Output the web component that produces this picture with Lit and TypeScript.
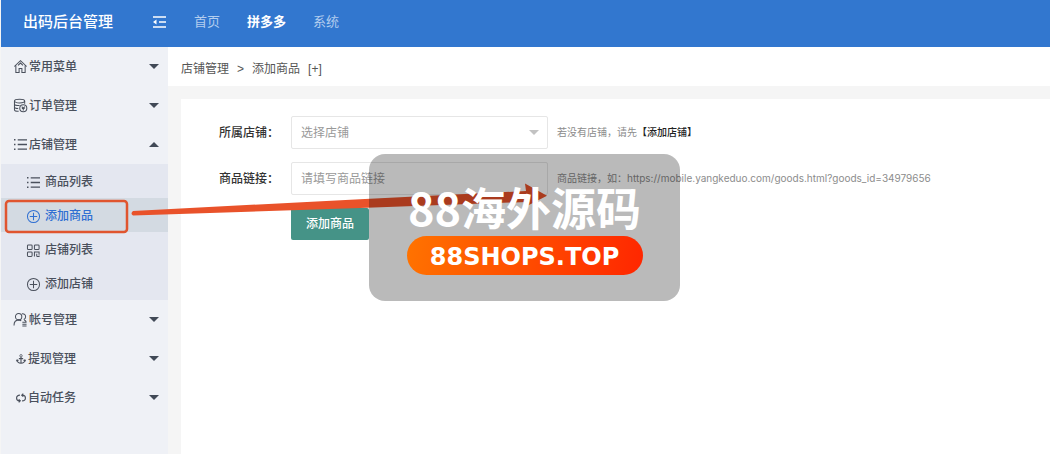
import { LitElement, html, svg, css } from "lit";
import { customElement, state } from "lit/decorators.js";

const icons: Record<string, unknown> = {
  home: svg`<path d="M1.300 8 8 1.800 14.700 8M3 7v7.500h3.500v-4.300h3v4.300H13V7M5.300 6.800 8 4.300l2.700 2.500"/>`,
  order: svg`<ellipse cx="7" cy="3.200" rx="5.500" ry="2"/><path d="M1.500 3.200v9.300c0 1 2 1.800 4.500 1.800M12.500 3.200V6M1.500 6.300c0 1 2.300 1.800 5.500 1.800M1.500 9.500c0 1 1.800 1.700 4 1.700"/><circle cx="11" cy="11" r="3.800"/><path d="M9.300 9.300l1.700 1.800 1.700-1.800M9.500 11.300h3M11 11v2.300"/>`,
  list: svg`<path d="M5 3h10M5 8h10M5 13h10" stroke-width="1.500"/><path d="M1 3h1.600M1 8h1.600M1 13h1.600" stroke-width="1.600"/>`,
  plus: svg`<circle cx="8" cy="8" r="6.500"/><path d="M8 4v8M4 8h8"/>`,
  grid: svg`<rect x="1.500" y="2" width="5" height="5" rx="1"/><rect x="9" y="2" width="5" height="5" rx="1"/><rect x="1.500" y="9.500" width="5" height="5" rx="1"/><path d="M9 14.500v-5h5v3M11.500 14.500H14v-1M11.500 11.500v3"/>`,
  users: svg`<circle cx="6" cy="5" r="3.400"/><path d="M1 14.500C1 11 3 8.500 6 8.400c1.200 0 2 .4 2.800 1M9.500 1.800c2.500-.3 4 1.200 4 3.200 0 1.500-.8 2.500-2 3M12 8.500c1.200.5 2 1.500 2.300 2.700M10 11h4.500M10 13h4.500M10 15h4.500"/>`,
  anchor: svg`<circle cx="8" cy="3.500" r="1.700"/><path d="M8 5.200V14M5 7.500h6M2.500 9.500c.3 3 2.500 4.500 5.500 4.500s5.200-1.500 5.500-4.500M1.500 11l1-1.800 2 1M14.500 11l-1-1.800-2 1" stroke-width="1.500"/>`,
  sync: svg`<path d="M6.500 4C3.500 4 1.800 5.700 1.800 8s1.500 4 4 4M4.800 9.800 7 12l-2.200 2.200M9.500 12c3 0 4.700-1.700 4.700-4s-1.500-4-4-4M11.200 1.800 9 4l2.200 2.200" stroke-width="1.600"/>`,
};

const icon = (name: string) =>
  html`<svg class="icon ${name}" viewBox="1 1 14 14" aria-hidden="true">${icons[name]}</svg>`;

interface Group {
  name: string;
  icon: string;
  items?: { name: string; icon: string }[];
}

const groups: Group[] = [
  { name: "常用菜单", icon: "home" },
  { name: "订单管理", icon: "order" },
  {
    name: "店铺管理",
    icon: "list",
    items: [
      { name: "商品列表", icon: "list" },
      { name: "添加商品", icon: "plus" },
      { name: "店铺列表", icon: "grid" },
      { name: "添加店铺", icon: "plus" },
    ],
  },
  { name: "帐号管理", icon: "users" },
  { name: "提现管理", icon: "anchor" },
  { name: "自动任务", icon: "sync" },
];

@customElement("app-root")
export class AppRoot extends LitElement {
  @state() private open = "店铺管理";
  @state() private current = "添加商品";

  static styles = css`
    :host {
      display: flex;
      flex-direction: column;
      position: relative;
      min-height: 100vh;
      box-sizing: border-box;
      padding-left: 1px;
      overflow: hidden;
      background: #f5f5f5;
      color: #333;
      font: 12px/18px "Liberation Sans", "Noto Sans CJK SC", sans-serif;
    }
    * { box-sizing: border-box; }
    a { color: inherit; text-decoration: none; }
    button, input, select { font: inherit; margin: 0; }

    .top {
      display: flex;
      align-items: center;
      height: 47px;
      padding: 0 22px 4px;
      background: #3277cf;
      color: #fff;
    }
    .brand { width: 129px; font-size: 15px; font-weight: 500; margin: 0; }
    .fold { display: flex; padding: 0; border: 0; background: none; color: #fff; }
    .fold svg { width: 15px; height: 14px; fill: none; stroke: currentColor; stroke-width: 1.400; }
    .tabs { display: flex; gap: 27px; margin-left: 27px; font-size: 13px; color: #b3cdee; }
    .tabs .on { color: #fff; font-weight: 700; }

    .body { display: flex; flex: 1; }
    .side { width: 167px; flex: none; background: #eff1f6; color: #4a505c; }
    .group {
      display: flex;
      align-items: center;
      width: 100%;
      height: 39px;
      padding: 0 9px 0 13px;
      border: 0;
      background: none;
      color: inherit;
      font-weight: 500;
    }
    .group .name { flex: 1; text-align: left; padding-left: 2px; }
    .caret { width: 10px; height: 5px; fill: #414956; }
    .caret.up { transform: rotate(180deg); }
    .icon { width: 13px; height: 13px; flex: none; overflow: visible; fill: none; stroke: currentColor; stroke-width: 1.100; }
    .group .anchor, .group .sync { width: 10px; height: 10px; margin: 0 0 0 2px; }
    .sub { background: #e4e7f0; }
    .item { display: flex; align-items: center; gap: 5px; height: 34px; padding: 2px 0 0 26px; font-weight: 500; }
    .item.on { background: #d3dae2; color: #2f6fd2; }

    .main { flex: 1; min-width: 0; display: flex; flex-direction: column; }
    .crumbs { display: flex; gap: 8px; height: 39px; padding: 13px 13px 0; background: #fff; color: #555; }
    .card { flex: 1; margin: 13px 0 0 13px; padding: 17px 38px; background: #fff; }
    .form { display: grid; gap: 13px; }
    .row { display: grid; grid-template-columns: 72px 257px 1fr; align-items: center; }
    .label { color: #333; font-weight: 500; }
    .field { position: relative; display: flex; align-items: center; }
    .box {
      width: 100%;
      height: 33px;
      padding: 0 9px;
      border: 1px solid #e6e6e6;
      border-radius: 2px;
      background: #fff;
      color: #999;
      appearance: none;
      outline: 0;
    }
    .box::placeholder { color: #999; opacity: 1; }
    .field .caret { position: absolute; right: 9px; fill: #c2c2c2; pointer-events: none; }
    .hint { padding-left: 9px; font-size: 10px; color: #8c8c8c; white-space: nowrap; }
    .url { font-family: Inter, sans-serif; }
    .hint a { color: #222; font-weight: 500; }
    .submit {
      grid-column: 2;
      justify-self: start;
      height: 32px;
      padding: 0 15px;
      border: 0;
      border-radius: 2px;
      background: #459387;
      color: #fff;
      font-weight: 500;
    }

    .notes { position: absolute; left: 0; top: 0; width: 560px; height: 240px; pointer-events: none; }
    .stamp {
      position: absolute;
      left: 369px;
      top: 154px;
      display: flex;
      flex-direction: column;
      align-items: center;
      gap: 12px;
      width: 311px;
      height: 147px;
      padding-top: 36px;
      border-radius: 16px;
      background: rgba(0, 0, 0, 0.27);
      color: #fff;
      font-weight: 700;
      white-space: nowrap;
      pointer-events: none;
    }
    .stamp-name { font: 700 45px/34px "Noto Sans CJK SC", sans-serif; }
    .stamp-site {
      width: 236px;
      padding-top: 3px;
      border-radius: 20px;
      background: linear-gradient(100deg, #ff7300, #ff2600);
      font: 700 24px/36px "DejaVu Sans", sans-serif;
      text-align: center;
    }
  `;

  private caret(up = false) {
    return html`<svg class="caret ${up ? "up" : ""}" viewBox="0 0 10 5" aria-hidden="true"><path d="M0 0h10L5 5z"/></svg>`;
  }

  private group(g: Group) {
    const open = this.open === g.name;
    return html`
      <button class="group" aria-expanded=${open} @click=${() => (this.open = open ? "" : g.name)}>
        ${icon(g.icon)}<span class="name">${g.name}</span>${this.caret(open)}
      </button>
      ${open && g.items
        ? html`<div class="sub">
            ${g.items.map(
              (i) => html`<a class="item ${i.name === this.current ? "on" : ""}" href="#"
                @click=${() => (this.current = i.name)}>${icon(i.icon)}<span>${i.name}</span></a>`
            )}
          </div>`
        : ""}
    `;
  }

  render() {
    return html`
      <header class="top">
        <h1 class="brand">出码后台管理</h1>
        <button class="fold" aria-label="Menu">
          <svg viewBox="0 0 15 14"><path d="M1 2h13M7 7h7M1 12h13"/><path d="M4.500 4.500v5L1 7z" fill="currentColor" stroke="none"/></svg>
        </button>
        <nav class="tabs"><a href="#">首页</a><a class="on" href="#">拼多多</a><a href="#">系统</a></nav>
      </header>
      <div class="body">
        <nav class="side">${groups.map((g) => this.group(g))}</nav>
        <main class="main">
          <div class="crumbs"><a href="#">店铺管理</a><span>&gt;</span><a href="#">添加商品</a><a href="#">[+]</a></div>
          <section class="card">
            <form class="form" @submit=${(e: Event) => e.preventDefault()}>
              <div class="row">
                <label class="label" for="shop">所属店铺：</label>
                <div class="field">
                  <select class="box" id="shop"><option>选择店铺</option></select>
                  ${this.caret()}
                </div>
                <div class="hint">若没有店铺，请先<a href="#">【添加店铺】</a></div>
              </div>
              <div class="row">
                <label class="label" for="link">商品链接：</label>
                <div class="field"><input class="box" id="link" type="text" placeholder="请填写商品链接" /></div>
                <div class="hint">商品链接，如：<span class="url">https://mobile.yangkeduo.com/goods.html?goods_id=34979656</span></div>
              </div>
              <div class="row"><button class="submit">添加商品</button></div>
            </form>
          </section>
        </main>
      </div>
      <svg class="notes" viewBox="0 0 560 240" aria-hidden="true">
        <rect x="6" y="201" width="121" height="31" rx="3" fill="none" stroke="#e0552f" stroke-width="2.500"/>
        <path d="M133 211 360 199.200 526 191 525 183.500 547 195.700 527 206 527 202 360 208 133 215.500q-3-2 0-4.500z" fill="#e9522a"/>
      </svg>
      <div class="stamp"><div class="stamp-name">88海外源码</div><div class="stamp-site">88SHOPS.TOP</div></div>
    `;
  }
}
